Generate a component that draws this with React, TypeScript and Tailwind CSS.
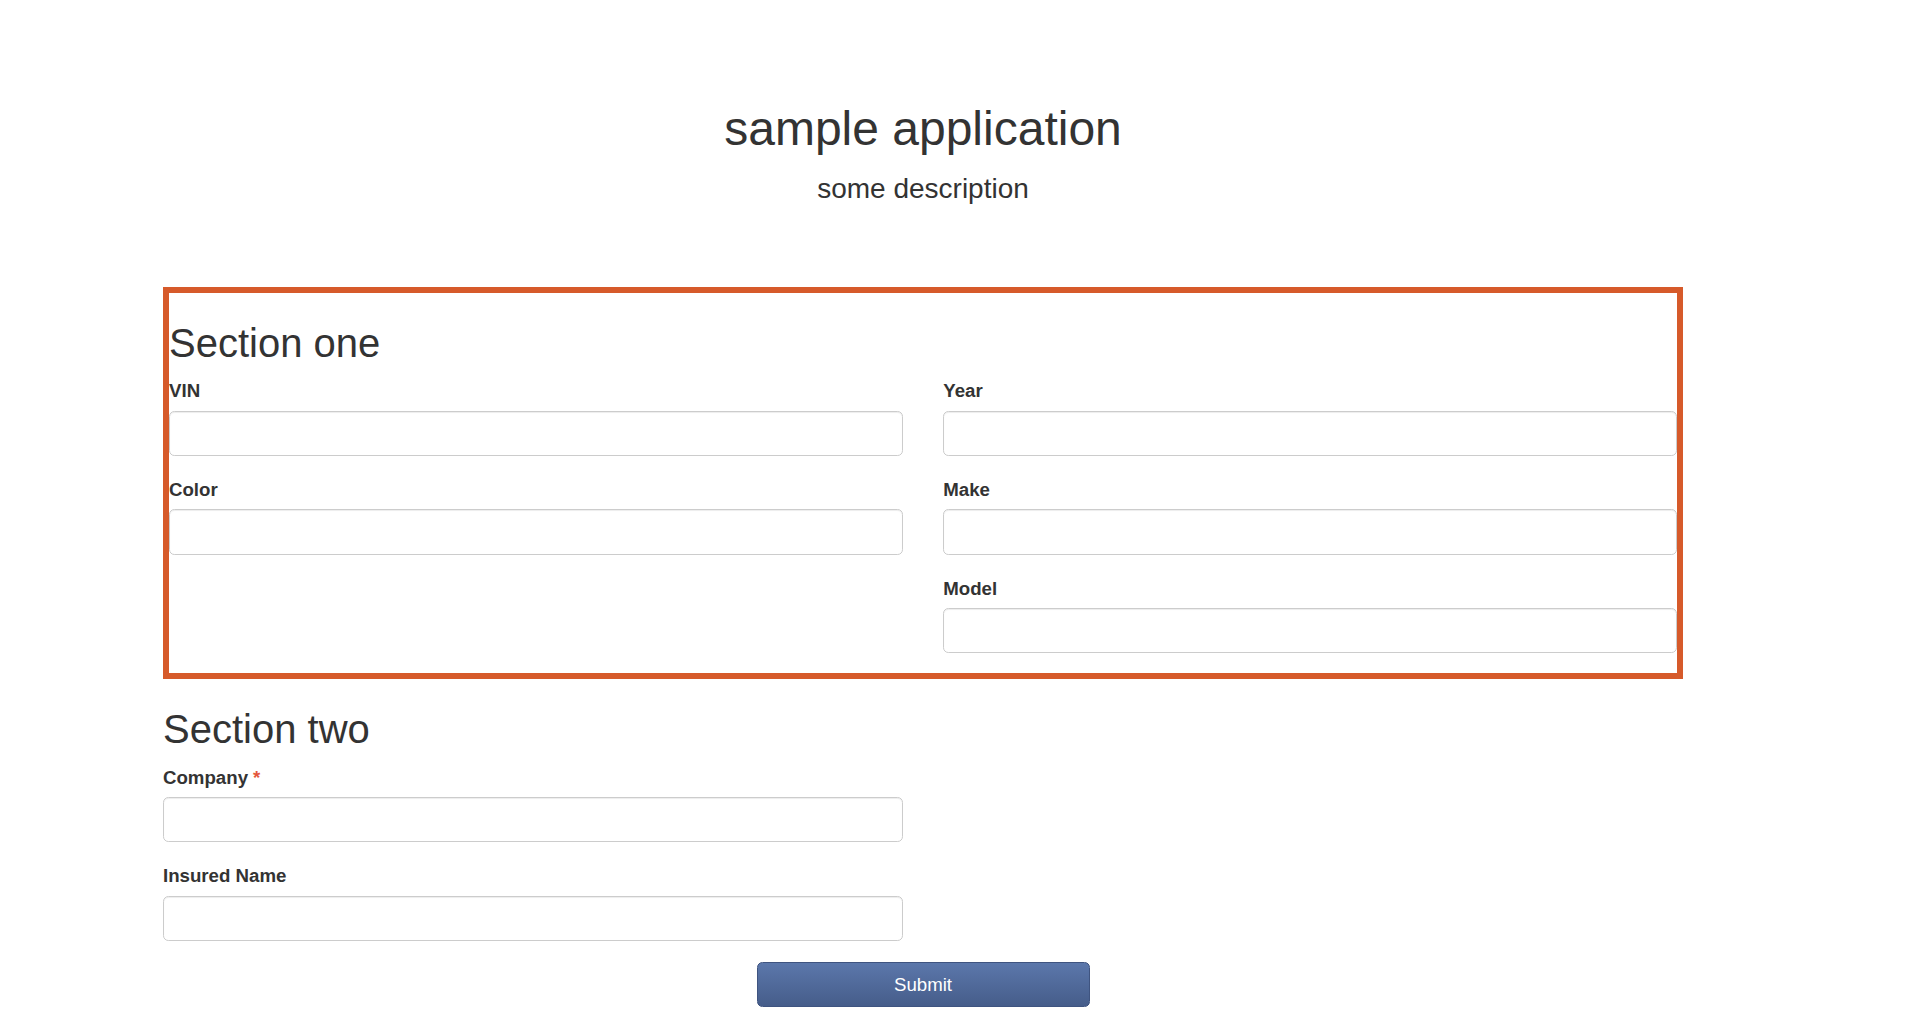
import React from 'react';

const font = { fontFamily: '"Liberation Sans", Arial, Helvetica, sans-serif' };

function Field({ label, required }: { label: string; required?: boolean }) {
  return (
    <div className="mb-[20px]">
      <label className="block mb-[6.67px] pt-[1px] text-[18.67px] leading-[26.67px] font-bold text-[#333]">
        {label}
        {required && <span className="text-[#e4573c] ml-[5px]">*</span>}
      </label>
      <input
        type="text"
        className="block w-full h-[45.33px] -mt-[1px] px-[16px] bg-white border border-[#ccc] rounded-[5.33px] shadow-[inset_0_1px_1px_rgba(0,0,0,0.075)] text-[18.67px] text-[#555] outline-none"
      />
    </div>
  );
}

export default function App() {
  return (
    <div className="min-h-screen bg-white text-[#333]" style={font}>
      <div className="ml-[163px] w-[1520px]">
        <div className="pt-[103px] text-center">
          <h1 className="text-[48px] leading-[52.8px] mb-[13.33px]">sample application</h1>
          <p className="text-[28px] leading-[39.2px]">some description</p>
        </div>

        <div className="mt-[79px] border-[6px] border-[#d65a2a]">
          <h2 className="mt-[27.5px] mb-[12.5px] text-[40px] leading-[44px]">Section one</h2>
          <div className="grid grid-cols-2 gap-x-[40.5px]">
            <div>
              <Field label="VIN" />
              <Field label="Color" />
            </div>
            <div>
              <Field label="Year" />
              <Field label="Make" />
              <Field label="Model" />
            </div>
          </div>
        </div>

        <h2 className="mt-[28px] mb-[12.5px] text-[40px] leading-[44px]">Section two</h2>
        <div className="w-[739.5px]">
          <Field label="Company" required />
          <Field label="Insured Name" />
        </div>

        <div className="flex justify-center">
          <button
            type="button"
            className="w-[333px] h-[45px] mt-[1px] rounded-[5.33px] border border-[#3f5480] bg-gradient-to-b from-[#5b77ab] to-[#465d8a] text-white text-[18.67px]"
          >
            Submit
          </button>
        </div>
      </div>
    </div>
  );
}
